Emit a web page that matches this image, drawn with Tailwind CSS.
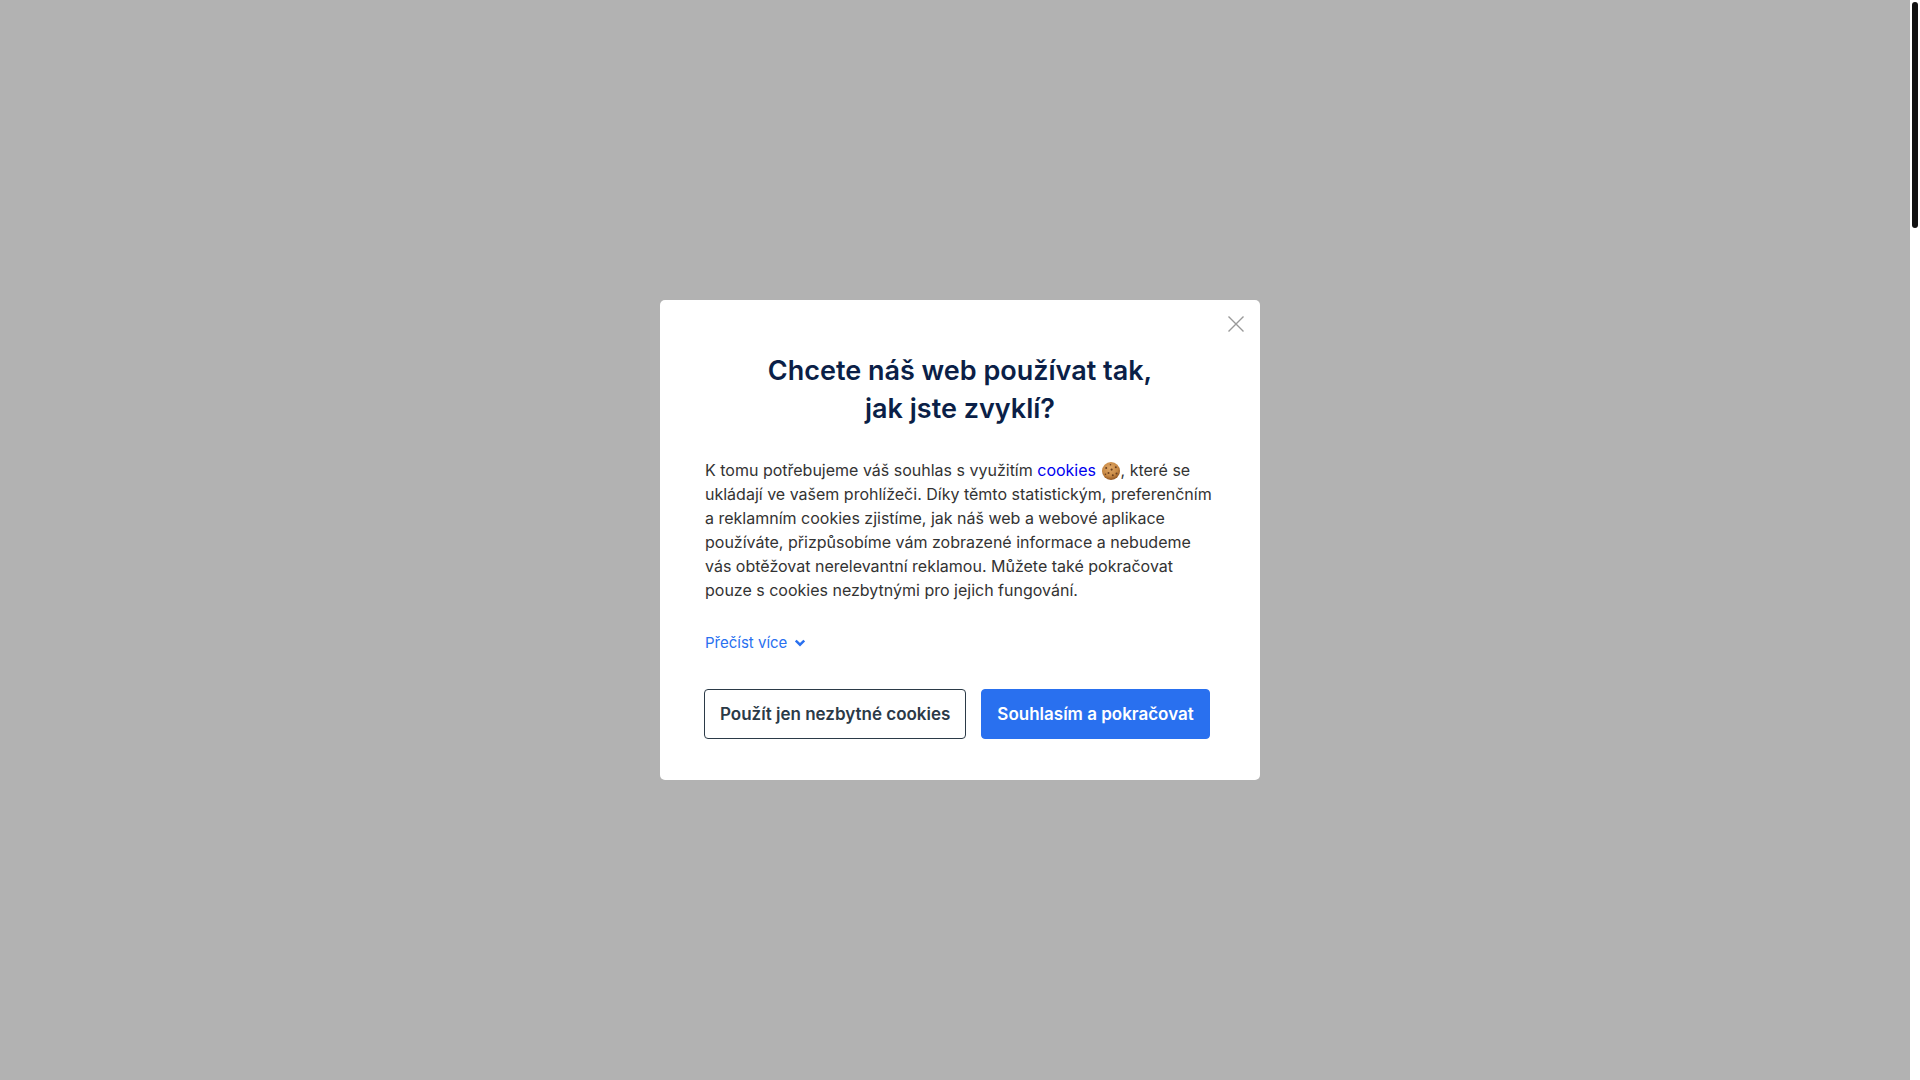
<!DOCTYPE html>
<html lang="cs">
<head>
<meta charset="utf-8">
<meta name="viewport" content="width=device-width, initial-scale=1">
<title>Nastavení cookies</title>
<script src="https://cdn.jsdelivr.net/npm/@tailwindcss/browser@4"></script>
</head>
<body class="flex h-screen overflow-hidden bg-[#b2b2b2] font-['Inter',sans-serif] antialiased">
<main class="flex flex-1 items-center justify-center pl-[10px]">
  <section role="dialog" aria-modal="true" aria-labelledby="title" class="relative w-full max-w-[600px] rounded-[5px] bg-white px-11 pt-[52px] pb-[41px]">
    <button type="button" aria-label="Zavřít" class="absolute top-4 right-4 size-4 text-[#999]">
      <svg viewBox="0 0 16 16" class="size-4" fill="none" stroke="currentColor" stroke-width="1.4"><path d="M.5.5l15 15M15.5.5l-15 15"/></svg>
    </button>
    <h1 id="title" class="text-center text-[27px] leading-[38px] font-semibold text-[#0b1f47]">Chcete náš web používat tak,<br>jak jste zvyklí?</h1>
    <p class="mt-[30px] px-px text-base leading-6 text-[#333]">K tomu potřebujeme váš souhlas s využitím <a href="#" class="text-[#0000ee]">cookies</a> <svg role="img" aria-label="cookie" viewBox="0 0 18 18" class="mx-px inline-block size-[18px] align-[-4px]"><defs><radialGradient id="dough" cx=".45" cy=".35" r=".65"><stop offset="0" stop-color="#e0a868"/><stop offset=".65" stop-color="#c98a45"/><stop offset="1" stop-color="#925622"/></radialGradient></defs><circle cx="9" cy="9" r="9" fill="url(#dough)"/><g fill="#6b4020"><circle cx="9.600" cy="7.600" r="1.100"/><circle cx="4.200" cy="6" r="1"/><circle cx="6.500" cy="11" r="1"/><circle cx="13.800" cy="5.200" r="1"/><circle cx="14.500" cy="11.500" r="1"/><circle cx="10.800" cy="13.200" r="1"/><circle cx="3.500" cy="12.300" r=".8"/><circle cx="8.500" cy="2.800" r=".8"/></g></svg>, které se<br>ukládají ve vašem prohlížeči. Díky těmto statistickým, preferenčním<br>a reklamním cookies zjistíme, jak náš web a webové aplikace<br>používáte, přizpůsobíme vám zobrazené informace a nebudeme<br>vás obtěžovat nerelevantní reklamou. Můžete také pokračovat<br>pouze s cookies nezbytnými pro jejich fungování.</p>
    <button type="button" class="mt-[29px] flex items-center gap-2 px-px text-[15px] leading-6 text-[#2970ef]">Přečíst více
      <svg viewBox="0 0 10 8" class="h-2 w-[10px]" fill="none" stroke="currentColor" stroke-width="2.400"><path d="M.8 1.500L5 5.700l4.200-4.200"/></svg>
    </button>
    <div class="mt-[34px] flex gap-[15px]">
      <button type="button" class="h-[50px] rounded border border-[#2b3a47] px-[15px] pt-0.5 text-[17px] font-semibold whitespace-nowrap text-[#2b3a47]">Použít jen nezbytné cookies</button>
      <button type="button" class="h-[50px] rounded border border-[#2970ef] bg-[#2970ef] px-[15px] pt-0.5 text-[17px] font-semibold whitespace-nowrap text-white">Souhlasím a pokračovat</button>
    </div>
  </section>
</main>
<div aria-hidden="true" class="w-[10px] bg-white p-0.5"><div class="h-[21%] rounded-full bg-[#111]"></div></div>
</body>
</html>
